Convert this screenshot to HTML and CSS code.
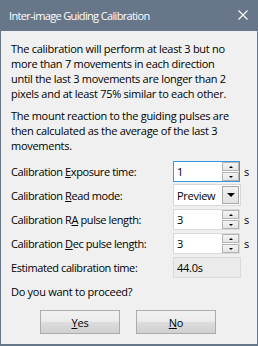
FILE: index.html
```html
<!DOCTYPE html>
<html>
<head>
<meta charset="utf-8">
<link rel="stylesheet" href="styles.css">
</head>
<body>
<div class="window">
  <div class="titlebar">
    <span class="title">Inter-image Guiding Calibration</span>
    <svg class="close" width="10" height="10" viewBox="0 0 10 10"><path d="M0.5 0.5 L9.5 9.5 M9.5 0.5 L0.5 9.5" stroke="#fff" stroke-width="1.1" fill="none"/></svg>
  </div>
  <div class="content">
    <p class="para">The calibration will perform at least 3 but no<br>more than 7 movements in each direction<br>until the last 3 movements are longer than 2<br>pixels and at least 75% similar to each other.</p>
    <p class="para second">The mount reaction to the guiding pulses are<br>then calculated as the average of the last 3<br>movements.</p>
    <div class="form">
      <span class="label">Calibration <u>E</u>xposure time:</span>
      <div class="spin focused"><span class="val">1</span><div class="btns"><div class="sb"><i class="up"></i></div><div class="sb"><i class="down"></i></div></div></div>
      <span class="unit">s</span>

      <span class="label">Calibration <u>R</u>ead mode:</span>
      <div class="combo"><span class="val">Preview</span><div class="drop"><i class="arrow"></i></div></div>
      <span></span>

      <span class="label">Calibration R<u>A</u> pulse length:</span>
      <div class="spin"><span class="val">3</span><div class="btns"><div class="sb"><i class="up"></i></div><div class="sb"><i class="down"></i></div></div></div>
      <span class="unit">s</span>

      <span class="label">Calibration <u>D</u>ec pulse length:</span>
      <div class="spin"><span class="val">3</span><div class="btns"><div class="sb"><i class="up"></i></div><div class="sb"><i class="down"></i></div></div></div>
      <span class="unit">s</span>

      <span class="label">Estimated calibration time:</span>
      <div class="readonly"><span class="val">44.0s</span></div>
      <span></span>
    </div>
    <p class="question">Do you want to proceed?</p>
    <div class="buttons">
      <button class="btn"><u>Y</u>es</button>
      <button class="btn"><u>N</u>o</button>
    </div>
  </div>
</div>
</body>
</html>
```
FILE: styles.css
```css
* { box-sizing: border-box; }
html, body { margin: 0; padding: 0; }
body {
  font-family: "Open Sans", "Noto Sans", sans-serif;
  font-size: 11px;
  letter-spacing: -0.28px;
  color: #000;
  background: #f0f0f0;
}
.window {
  width: 258px;
  height: 346px;
  border: 1px solid #677689;
  border-top: none;
  border-bottom-width: 2px;
  background: #f0f0f0;
  display: flex;
  flex-direction: column;
}
.titlebar {
  height: 31px;
  margin: 0 -1px;
  background: #677689;
  color: #fff;
  display: flex;
  align-items: center;
  padding: 0 10px 0 9px;
  justify-content: space-between;
}
.title { font-size: 11px; letter-spacing: -0.65px; line-height: 15px; padding-bottom: 1px; }
.close { margin-top: -1px; }
.content {
  padding: 10px 0 0 10px;
}
.para {
  margin: 0;
  line-height: 15px;
  white-space: nowrap;
}
.para.second { margin-top: 7px; }
.form {
  margin-top: 8px;
  display: grid;
  grid-template-columns: 162px 67px auto;
  grid-auto-rows: 21px;
  row-gap: 3px;
  align-items: center;
}
.label { line-height: 15px; white-space: nowrap; letter-spacing: -0.4px; }
.unit { padding-left: 4px; line-height: 15px; }
.spin {
  height: 21px;
  border: 1px solid #d9d9d9;
  background: #fff;
  display: flex;
  align-items: center;
  justify-content: space-between;
}
.spin.focused { border-color: #3c97de; }
.val { padding-left: 3px; line-height: 15px; }
.btns {
  display: flex;
  flex-direction: column;
  width: 17px;
  height: 19px;
  gap: 1px;
}
.sb {
  flex: 1;
  border: 1px solid #b4b4b4;
  background: linear-gradient(#f4f4f4, #e4e4e4);
  display: flex;
  align-items: center;
  justify-content: center;
}
.up, .down { display: block; width: 0; height: 0; border-left: 2px solid transparent; border-right: 2px solid transparent; }
.up { border-bottom: 2px solid #000; }
.down { border-top: 2px solid #000; }
.combo {
  height: 22px;
  margin-top: -1px;
  width: 68px;
  border: 1px solid #d9d9d9;
  background: #fff;
  display: flex;
  align-items: center;
  justify-content: space-between;
  padding-right: 1px;
}
.drop {
  width: 17px;
  height: 18px;
  border: 1px solid #a8a8a8;
  background: linear-gradient(#f2f2f2, #e2e2e2);
  display: flex;
  align-items: center;
  justify-content: center;
}
.arrow { display: block; width: 0; height: 0; border-left: 4px solid transparent; border-right: 4px solid transparent; border-top: 4px solid #000; }
.readonly {
  height: 21px;
  width: 68px;
  border: 1px solid #dadada;
  background: #ebebeb;
  display: flex;
  align-items: center;
}
.question { margin: 6px 0 0; line-height: 15px; }
.buttons {
  margin-top: 11px;
  margin-left: -10px;
  display: flex;
  justify-content: center;
  gap: 16px;
  padding-right: 2px;
}
.btn {
  width: 80px;
  height: 24px;
  font-family: inherit;
  font-size: 11px;
  letter-spacing: -0.15px;
  color: #000;
  border: 1px solid #acacac;
  background: linear-gradient(#f2f2f2 0%, #ebebeb 50%, #dddddd 51%, #cfcfcf 100%);
  padding: 0;
  line-height: 15px;
}
```
